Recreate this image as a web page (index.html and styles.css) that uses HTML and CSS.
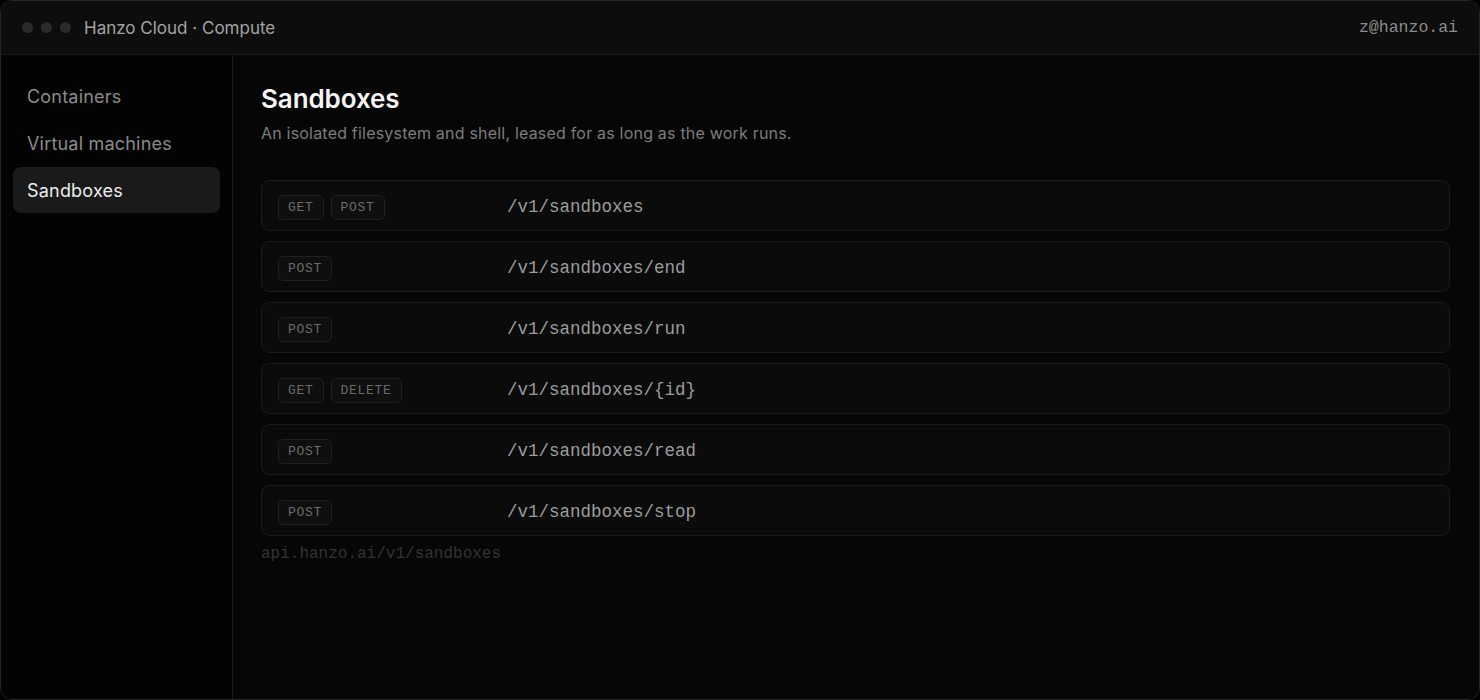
FILE: index.html
```html
<!DOCTYPE html>
<html lang="en">
<head>
<meta charset="utf-8">
<title>Hanzo Cloud · Compute</title>
<link rel="stylesheet" href="styles.css">
</head>
<body>
<div class="window">
  <header class="titlebar">
    <div class="titlebar-left">
      <div class="traffic">
        <span class="dot"></span><span class="dot"></span><span class="dot"></span>
      </div>
      <span class="app-title">Hanzo Cloud · Compute</span>
    </div>
    <span class="account">z@hanzo.ai</span>
  </header>
  <div class="layout">
    <nav class="sidebar">
      <a class="nav-item">Containers</a>
      <a class="nav-item">Virtual machines</a>
      <a class="nav-item active">Sandboxes</a>
    </nav>
    <main class="main">
      <h1 class="page-title">Sandboxes</h1>
      <p class="page-desc">An isolated filesystem and shell, leased for as long as the work runs.</p>
      <ul class="routes">
        <li class="route">
          <div class="methods"><span class="method">GET</span><span class="method">POST</span></div>
          <span class="path">/v1/sandboxes</span>
        </li>
        <li class="route">
          <div class="methods"><span class="method">POST</span></div>
          <span class="path">/v1/sandboxes/end</span>
        </li>
        <li class="route">
          <div class="methods"><span class="method">POST</span></div>
          <span class="path">/v1/sandboxes/run</span>
        </li>
        <li class="route">
          <div class="methods"><span class="method">GET</span><span class="method">DELETE</span></div>
          <span class="path">/v1/sandboxes/{id}</span>
        </li>
        <li class="route">
          <div class="methods"><span class="method">POST</span></div>
          <span class="path">/v1/sandboxes/read</span>
        </li>
        <li class="route">
          <div class="methods"><span class="method">POST</span></div>
          <span class="path">/v1/sandboxes/stop</span>
        </li>
      </ul>
      <div class="base-url">api.hanzo.ai/v1/sandboxes</div>
    </main>
  </div>
</div>
</body>
</html>
```

FILE: styles.css
```css
* {
  box-sizing: border-box;
}

html, body {
  margin: 0;
  height: 100%;
  background: #000;
}

body {
  font-family: Inter, "Noto Sans", sans-serif;
  color: #e6e6e6;
}

.window {
  height: 100vh;
  display: flex;
  flex-direction: column;
  border: 1px solid #262626;
  border-radius: 12px;
  overflow: hidden;
  background: #060606;
}

/* top bar */
.titlebar {
  height: 54px;
  flex: none;
  display: flex;
  align-items: center;
  justify-content: space-between;
  padding: 0 21px 0 21px;
  background: #0d0d0d;
  border-bottom: 1px solid #1c1c1c;
}

.titlebar-left {
  display: flex;
  align-items: center;
  gap: 13px;
}

.traffic {
  display: flex;
  gap: 8px;
}

.dot {
  width: 11px;
  height: 11px;
  border-radius: 50%;
  background: #2b2b2b;
}

.app-title {
  font-size: 17px;
  color: #a3a3a3;
}

.account {
  font-family: "Liberation Mono", "DejaVu Sans Mono", monospace;
  font-size: 16.5px;
  color: #8c8c8c;
}

/* body */
.layout {
  flex: 1;
  display: flex;
  min-height: 0;
}

.sidebar {
  width: 232px;
  flex: none;
  display: flex;
  flex-direction: column;
  gap: 1px;
  padding: 18px 12px 0 12px;
  background: #030303;
  border-right: 1px solid #1a1a1a;
}

.nav-item {
  height: 46px;
  display: flex;
  align-items: center;
  padding: 0 14px;
  border-radius: 8px;
  font-size: 18px;
  letter-spacing: 0.2px;
  color: #8a8a8a;
}

.nav-item.active {
  background: #1a1a1a;
  color: #ececec;
}

.main {
  flex: 1;
  padding: 29px 29px 0 28px;
  background: #060606;
}

.page-title {
  margin: 0;
  font-size: 26px;
  line-height: 30px;
  font-weight: 600;
  color: #f4f4f4;
  letter-spacing: -0.1px;
}

.page-desc {
  margin: 8px 0 0;
  font-size: 16px;
  line-height: 22px;
  letter-spacing: 0.2px;
  color: #7c7c7c;
}

.routes {
  list-style: none;
  margin: 36px 0 0;
  padding: 0;
  display: flex;
  flex-direction: column;
  gap: 10px;
}

.route {
  height: 51px;
  display: flex;
  align-items: center;
  padding: 3px 16px 0;
  background: #0b0b0b;
  border: 1px solid #1a1a1a;
  border-radius: 8px;
}

.methods {
  width: 229px;
  flex: none;
  display: flex;
  gap: 7px;
}

.method {
  height: 25px;
  display: inline-flex;
  align-items: center;
  padding: 0 9px;
  border: 1px solid #202020;
  border-radius: 5px;
  background: #0f0f0f;
  font-family: "Liberation Mono", "DejaVu Sans Mono", monospace;
  font-size: 13px;
  letter-spacing: 0.7px;
  color: #6b6b6b;
}

.path {
  font-family: "Liberation Mono", "DejaVu Sans Mono", monospace;
  font-size: 17.5px;
  color: #9c9c9c;
}

.base-url {
  margin-top: 8px;
  font-family: "Liberation Mono", "DejaVu Sans Mono", monospace;
  font-size: 16px;
  line-height: 20px;
  color: #333;
}
```
